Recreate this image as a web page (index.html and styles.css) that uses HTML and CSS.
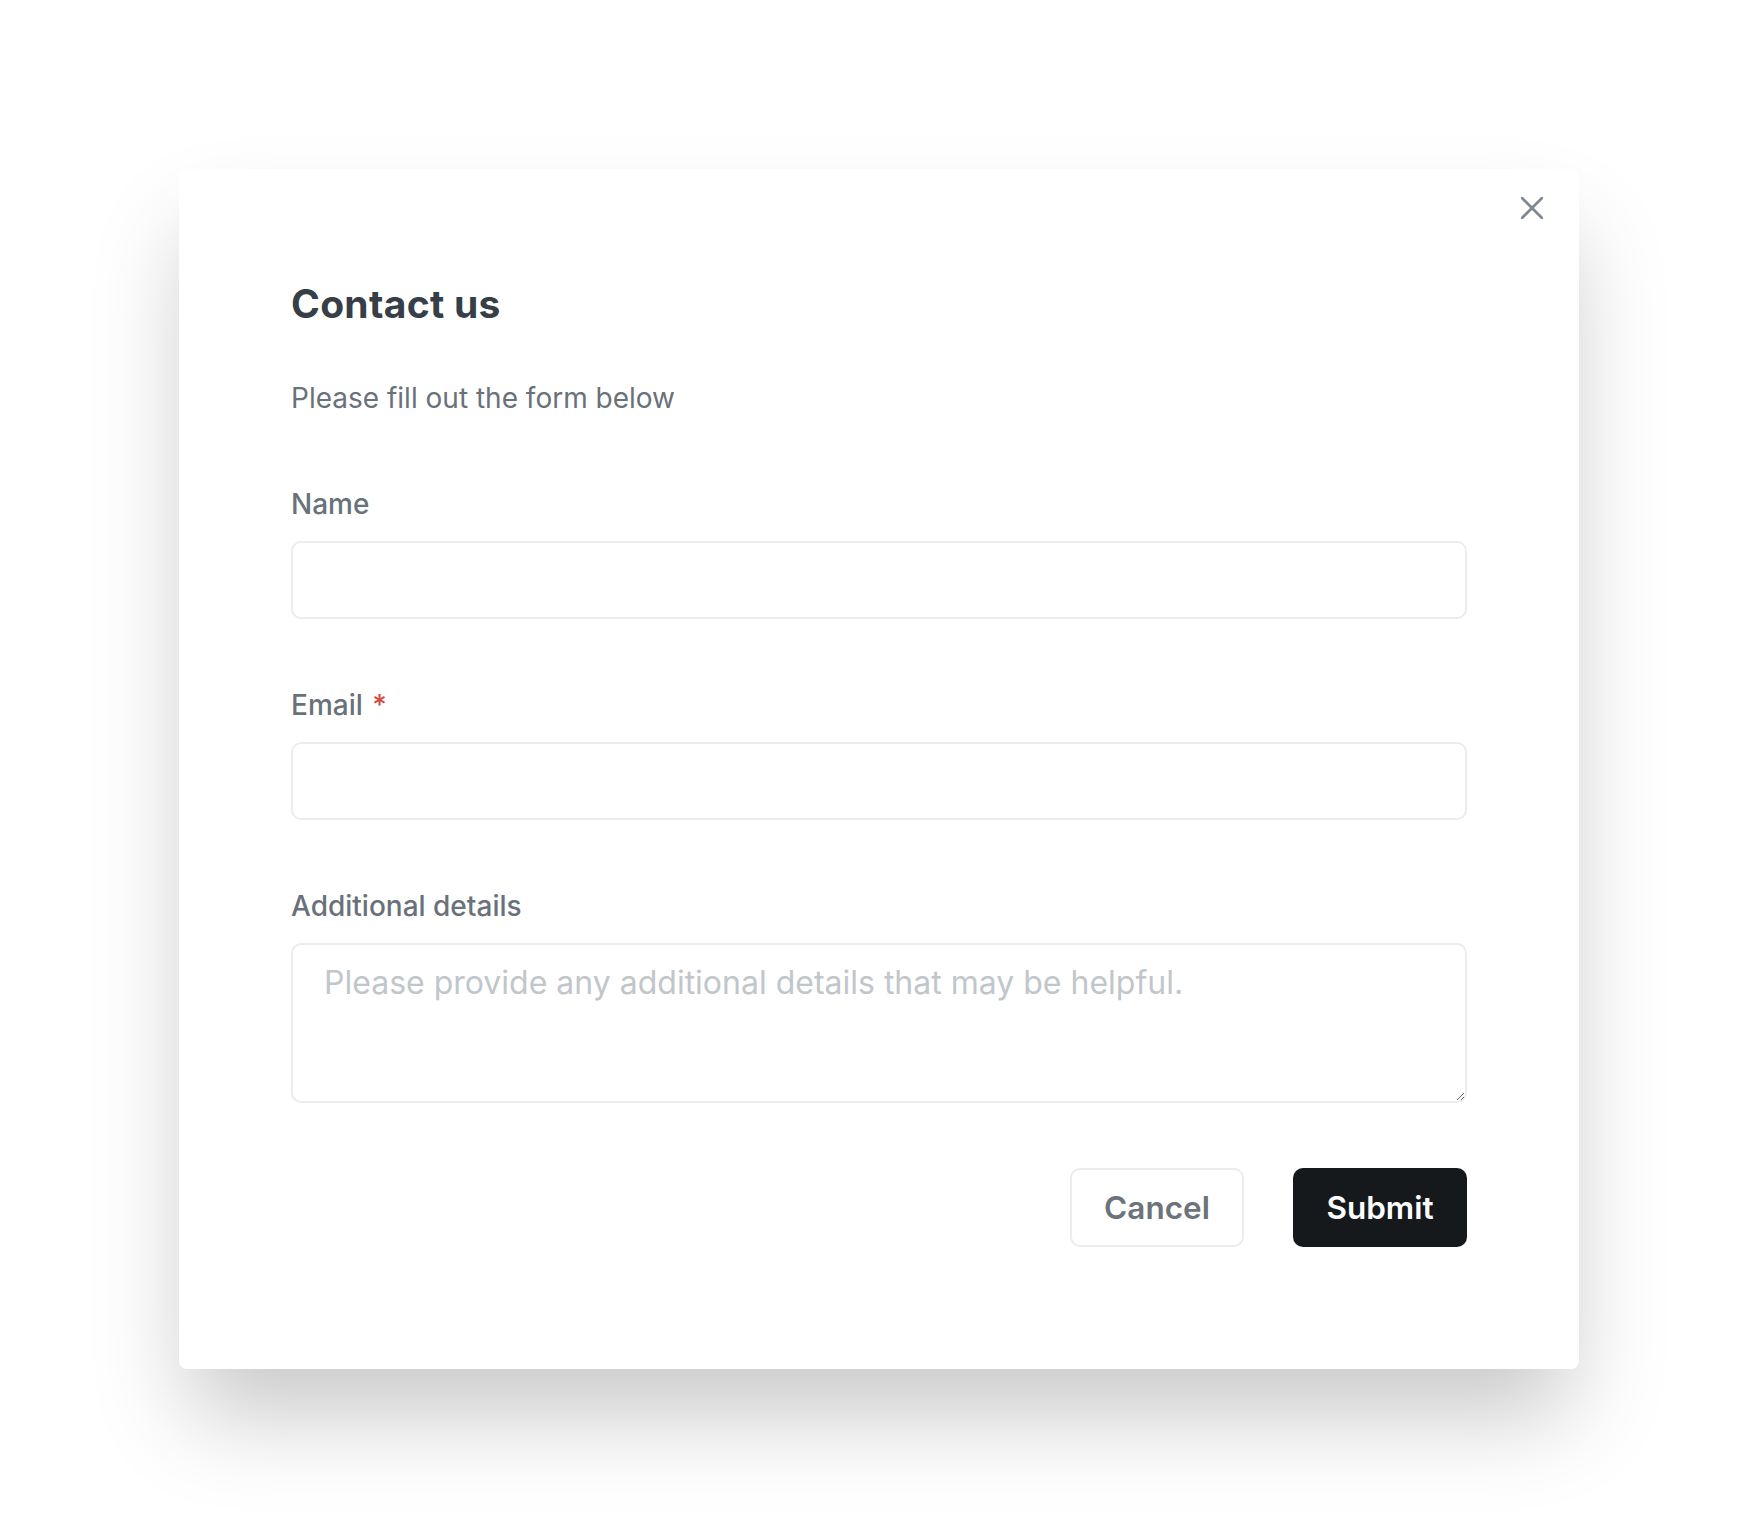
FILE: index.html
```html
<!DOCTYPE html>
<html lang="en">
<head>
    <meta charset="UTF-8">
    <meta name="viewport" content="width=device-width, initial-scale=1.0">
    <title>Contact us</title>
    <link rel="stylesheet" href="styles.css">
</head>
<body>
    <div class="modal">
        <button class="close-btn" aria-label="Close">
            <svg width="22" height="22" viewBox="0 0 22 22">
                <path d="M1 1L21 21M21 1L1 21" stroke="#7f878f" stroke-width="2.7" stroke-linecap="round" fill="none"/>
            </svg>
        </button>

        <h1 class="title">Contact us</h1>
        <p class="subtitle">Please fill out the form below</p>

        <form class="contact-form">
            <div class="field">
                <label for="name">Name</label>
                <input type="text" id="name">
            </div>
            <div class="field">
                <label for="email">Email <span class="required">*</span></label>
                <input type="email" id="email">
            </div>
            <div class="field">
                <label for="details">Additional details</label>
                <textarea id="details" placeholder="Please provide any additional details that may be helpful."></textarea>
            </div>

            <div class="actions">
                <button type="button" class="btn btn-cancel">Cancel</button>
                <button type="submit" class="btn btn-submit">Submit</button>
            </div>
        </form>
    </div>
</body>
</html>
```

FILE: styles.css
```css
* {
    box-sizing: border-box;
}

body {
    font-family: Inter, "Noto Sans", sans-serif;
    background-color: #ffffff;
    margin: 0;
    min-height: 100vh;
    display: flex;
    align-items: center;
    justify-content: center;
}

.modal {
    position: relative;
    width: 1400px;
    background: #fff;
    border-radius: 8px;
    padding: 112px 112px 122px;
    box-shadow: 0 55px 90px -10px rgba(0, 0, 0, 0.22);
}

.close-btn {
    position: absolute;
    top: 17px;
    right: 25px;
    width: 44px;
    height: 44px;
    border: none;
    background: none;
    padding: 0;
    display: flex;
    align-items: center;
    justify-content: center;
    cursor: pointer;
}

.title {
    margin: 0;
    font-size: 39px;
    line-height: 46px;
    font-weight: 700;
    letter-spacing: 0.3px;
    color: #363f47;
}

.subtitle {
    margin: 50px 0 0;
    font-size: 28px;
    line-height: 42px;
    color: #69717a;
}

.field {
    display: flex;
    flex-direction: column;
    margin-top: 65px;
}

.field:first-child {
    margin-top: 64px;
}

label {
    font-size: 28px;
    line-height: 42px;
    font-weight: 500;
    color: #69717a;
    margin-bottom: 16px;
}

.required {
    color: #d9463e;
    margin-left: 2px;
}

input[type="text"], input[type="email"], textarea {
    width: 100%;
    border: 2px solid #eaecee;
    border-radius: 10px;
    font-family: inherit;
    outline: none;
    background: #fff;
}

input[type="text"], input[type="email"] {
    height: 78px;
    padding: 0 30px;
    font-size: 28px;
}

textarea {
    height: 160px;
    padding: 14px 31px;
    font-size: 32px;
    line-height: 48px;
    color: #363f47;
    resize: vertical;
}

textarea::placeholder {
    color: #c1c6cb;
}

.actions {
    display: flex;
    justify-content: flex-end;
    gap: 49px;
    margin-top: 65px;
}

.btn {
    height: 79px;
    width: 174px;
    font-family: inherit;
    font-size: 31.5px;
    font-weight: 600;
    border-radius: 10px;
    cursor: pointer;
}

.btn-cancel {
    width: 174px;
    background: #fff;
    border: 2px solid #eaecee;
    color: #6b737b;
}

.btn-submit {
    background: #15191c;
    border: none;
    color: #fff;
}
```
